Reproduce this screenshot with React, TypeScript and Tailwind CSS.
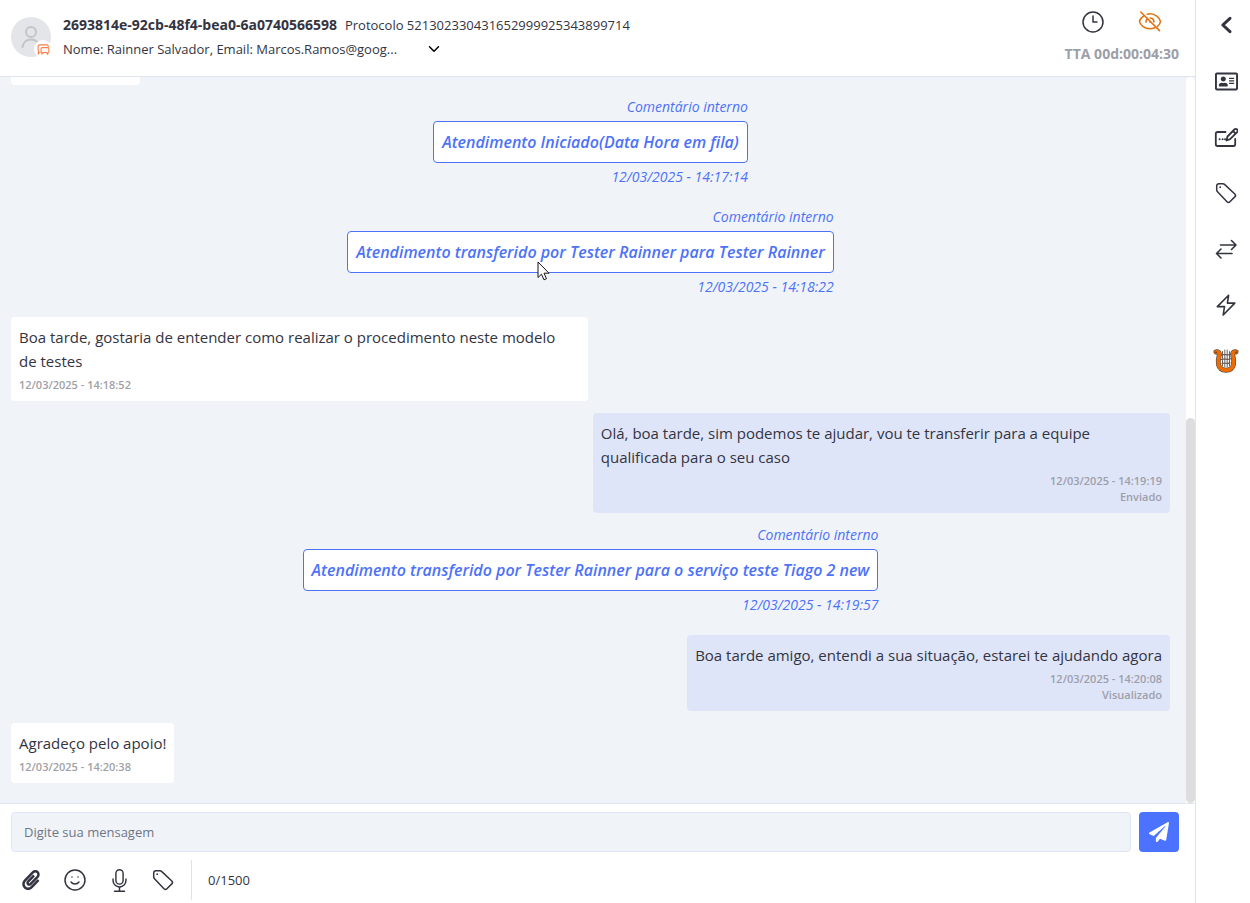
import { useState } from "react";
import type { ReactNode } from "react";
import { ChevronDown, Clock3, Smile } from "lucide-react";
import { FaPaperclip, FaPaperPlane, FaRegAddressCard } from "react-icons/fa";
import { BsMic } from "react-icons/bs";

type Message =
  | { kind: "comment"; text: string; time: string; pointer?: boolean }
  | { kind: "in"; text: string; time: string }
  | { kind: "out"; text: string; time: string; status: string };

const MAX_LENGTH = 1500;

const MESSAGES: Message[] = [
  { kind: "comment", text: "Atendimento Iniciado(Data Hora em fila)", time: "12/03/2025 - 14:17:14" },
  { kind: "comment", text: "Atendimento transferido por Tester Rainner para Tester Rainner", time: "12/03/2025 - 14:18:22", pointer: true },
  { kind: "in", text: "Boa tarde, gostaria de entender como realizar o procedimento neste modelo de\u00a0testes", time: "12/03/2025 - 14:18:52" },
  { kind: "out", text: "Olá, boa tarde, sim podemos te ajudar, vou te transferir para a equipe qualificada para o seu caso", time: "12/03/2025 - 14:19:19", status: "Enviado" },
  { kind: "comment", text: "Atendimento transferido por Tester Rainner para o serviço teste Tiago 2 new", time: "12/03/2025 - 14:19:57" },
  { kind: "out", text: "Boa tarde amigo, entendi a sua situação, estarei te ajudando agora", time: "12/03/2025 - 14:20:08", status: "Visualizado" },
  { kind: "in", text: "Agradeço pelo apoio!", time: "12/03/2025 - 14:20:38" },
];

function Line({ size = 24, width = 1.5, children }: { size?: number; width?: number; children: ReactNode }) {
  return (
    <svg width={size} height={size} viewBox="0 0 24 24" fill="none" stroke="currentColor" strokeWidth={width} strokeLinecap="round" strokeLinejoin="round">
      {children}
    </svg>
  );
}

const TagIcon = () => (
  <Line>
    <path d="M4.8 2.8h4c.8 0 1.5.3 2 .8l10 9.400c.9.9.9 2 0 2.900l-4.900 4.900c-.9.9-2 .9-2.900 0l-9.500-10c-.5-.5-.8-1.200-.8-2V4.900c0-1.200.9-2.100 2.100-2.100z" />
    <path d="M6.200 6.200h.01" strokeWidth={1.800} />
  </Line>
);

const BackIcon = () => (
  <Line width={3}><path d="M16 5.300 8.800 12l7.200 6.700" /></Line>
);

const DraftIcon = () => (
  <Line width={1.800}>
    <path d="M11.500 7h-8a1.700 1.700 0 0 0-1.700 1.700v10.600A1.700 1.700 0 0 0 3.500 21h16a1.700 1.700 0 0 0 1.700-1.700V14" />
    <path d="m12.500 15.500 1-4 6.900-7a1.900 1.900 0 0 1 2.700 2.700l-7 7zM19 6l2.600 2.600" />
    <path d="M5.600 14.200h.01M8.600 14.200h.01M11 14.200h.01" strokeWidth={2} />
  </Line>
);

const TransferIcon = () => (
  <Line width={1.600}>
    <path d="M6.500 8H22M17.500 3.500 22 8l-4.500 4.500M18 16.500H2.500M7 12l-4.500 4.500L7 21" />
  </Line>
);

const BoltIcon = () => (
  <Line width={1.600}><path d="M14.600 2.300 3.300 13.600h7.200L9.200 22 20.800 10.100h-7.400z" /></Line>
);

const EyeOffIcon = () => (
  <Line width={1.600}>
    <path d="M5.800 5.800C3.200 7.600 1.700 9.900 1.500 11.500c.5 3.300 5 7.300 10.500 7.300 1.700 0 3.300-.4 4.700-1M9.200 4.200c.9-.2 1.800-.4 2.800-.4 5.500 0 10 4 10.500 7.700-.2 1.700-1.300 3.500-3 4.900" />
    <path d="M8 12.100a4 4 0 0 1 1.700-3.700M12.200 8a4 4 0 0 1 3.700 4M11.800 12h.8M2.800 2l18.700 18.600" />
  </Line>
);

function LyreIcon() {
  const frame = "M3 4c2.700-.6 4 1 3.200 3.500C4.700 12.600 3.700 22.200 13 22.200s8.300-9.600 6.800-14.700C19 5 20.300 3.400 23 4";
  return (
    <svg width={26} height={26} viewBox="0 0 26 26" fill="none" strokeLinecap="round">
      <path d={frame} stroke="#4b4b50" strokeWidth={5} />
      <path d={frame} stroke="#ef6c00" strokeWidth={3.800} />
      <circle cx={3} cy={4.500} r={1} fill="#7a4420" />
      <circle cx={23} cy={4.500} r={1} fill="#7a4420" />
      <path d="M9.500 3.500v14.500M11.800 2v17M14.200 2v17M16.500 3.500v14.500" stroke="#6b6562" strokeWidth={1} />
      <path d="M8 7c3-1.500 7 1 10-.8M8.500 11.500c3-1.500 6 1 9-.8M9 15.500c3-1.200 5 .8 8-.6" stroke="#6b5a50" strokeWidth={1.200} />
    </svg>
  );
}

function Avatar() {
  return (
    <div className="relative h-10 w-10 shrink-0 rounded-full bg-[#e4e5e9] text-[#c4c4c6]">
      <svg width={40} height={40} viewBox="0 0 40 40" fill="none" stroke="currentColor" strokeWidth={2} strokeLinecap="round">
        <circle cx={20} cy={15} r={5} />
        <path d="M11.500 30c.6-4.500 4-7.400 8.500-7.400 2.400 0 4.500.8 6 2.200" />
      </svg>
      <span className="absolute -right-px -bottom-px flex h-[18px] w-[18px] items-center justify-center rounded-full bg-white text-[#fa7e45]">
        <Line size={13} width={2}>
          <path d="M6 17H4l-1.500 3.500v-7C2 12.500 2 12 2 11V7.500C2 5 3.500 3.500 5.500 3.500h12c2 0 3.500 1.500 3.500 3.500" />
          <path d="M12 8.500h7.500c1.500 0 2.500 1 2.500 2.500v4c0 1.500-1 2.500-2 2.500V21l-3-3.500h-5l-3 3v-3.500c-1-.5-1.500-1-1.500-2v-4c0-1.500 1-2.500 2.500-2.500z" />
        </Line>
      </span>
    </div>
  );
}

function Pointer() {
  return (
    <svg className="absolute top-[29px] left-[189px]" width={13} height={20} viewBox="0 0 13 20">
      <path d="M1 1v15.500l3.500-3.300 2.500 5.600 2.500-1.100L7 12.200h5z" fill="#fff" stroke="#15151d" strokeWidth={1} />
    </svg>
  );
}

function ChatItem({ msg }: { msg: Message }) {
  if (msg.kind === "comment") {
    return (
      <div className="mb-5 flex flex-col items-end gap-1 self-center text-sm leading-5 text-[#4d72f8] italic">
        <span>Comentário interno</span>
        <p className="relative rounded-sm border border-[#4d72f8] bg-white p-2 text-base leading-6 font-semibold">
          {msg.text}
          {msg.pointer && <Pointer />}
        </p>
        <span>{msg.time}</span>
      </div>
    );
  }
  if (msg.kind === "in") {
    return (
      <div className="mb-3 flex max-w-[49.8%] flex-col gap-1 self-start rounded-sm bg-white p-2">
        <p className="text-[15px] leading-6">{msg.text}</p>
        <span className="text-[11px] leading-4 font-semibold text-[#a0a1a6]">{msg.time}</span>
      </div>
    );
  }
  return (
    <div className="mb-3 flex max-w-[49.8%] flex-col gap-1 self-end rounded-sm bg-[#dfe5f9] p-2">
      <p className="text-[15px] leading-6">{msg.text}</p>
      <div className="flex flex-col items-end text-[11px] leading-4 font-semibold text-[#9c9fa9]">
        <span>{msg.time}</span>
        <span>{msg.status}</span>
      </div>
    </div>
  );
}

const SIDE_ACTIONS = [
  { label: "Recolher", icon: <BackIcon /> },
  { label: "Contato", icon: <FaRegAddressCard size={23} /> },
  { label: "Rascunho", icon: <DraftIcon /> },
  { label: "Etiquetas", icon: <TagIcon /> },
  { label: "Transferir", icon: <TransferIcon /> },
  { label: "Ações rápidas", icon: <BoltIcon /> },
  { label: "Lira", icon: <LyreIcon /> },
];

const INPUT_ACTIONS = [
  { label: "Anexar", icon: <FaPaperclip size={20} /> },
  { label: "Emoji", icon: <Smile size={24} strokeWidth={1.5} /> },
  { label: "Gravar", icon: <BsMic size={23} /> },
  { label: "Etiqueta", icon: <TagIcon /> },
];

export default function App() {
  const [draft, setDraft] = useState("");

  return (
    <div className="flex h-screen bg-white font-['Open_Sans','Noto_Sans',sans-serif] text-[#33343f]">
      <main className="flex min-w-0 flex-1 flex-col border-r border-[#e2e4ea]">
        {/* Header */}
        <header className="flex items-start justify-between border-b border-[#dfe4ef] pt-2.5 pr-4 pb-3 pl-[11px]">
          <div className="flex items-center gap-3 pt-[3px]">
            <Avatar />
            <div className="text-[13px] leading-6">
              <div className="flex gap-2">
                <strong className="text-sm leading-6 font-bold">2693814e-92cb-48f4-bea0-6a0740566598</strong>
                <span>Protocolo 521302330431652999925343899714</span>
              </div>
              <div className="flex items-center gap-7">
                <span>Nome: Rainner Salvador, Email: Marcos.Ramos@goog...</span>
                <button aria-label="Mais detalhes" className="text-black"><ChevronDown size={18} /></button>
              </div>
            </div>
          </div>
          <div className="flex flex-col gap-2.5">
            <div className="flex justify-around">
              <button aria-label="Histórico"><Clock3 size={24} strokeWidth={1.5} /></button>
              <button aria-label="Ocultar" className="text-[#e07414]"><EyeOffIcon /></button>
            </div>
            <span className="text-sm leading-5 font-bold text-[#9c9ea8]">TTA 00d:00:04:30</span>
          </div>
        </header>

        {/* Messages */}
        <section className="flex min-h-0 flex-1 overflow-hidden bg-[#f0f4f9]">
          <div className="flex flex-1 flex-col justify-end pr-4 pb-2 pl-[11px]">
            <div className="mb-3 h-2 w-[129px] rounded-b-sm bg-white" />
            {MESSAGES.map(m => <ChatItem key={m.time} msg={m} />)}
          </div>
          <div className="flex w-[9px] flex-col justify-end rounded-t-full bg-white">
            <div className="h-[53%] rounded-full bg-[#dddddd]" />
          </div>
        </section>

        {/* Input */}
        <footer className="border-t border-[#dfe4ef] pt-2 pr-4 pb-[3px] pl-[11px]">
          <div className="flex gap-2">
            <input
              value={draft}
              maxLength={MAX_LENGTH}
              onChange={e => setDraft(e.target.value)}
              aria-label="Mensagem"
              placeholder="Digite sua mensagem"
              className="h-10 min-w-0 flex-1 rounded-sm border border-[#dfe5f9] bg-[#f0f4f9] px-3 text-[13px] outline-none placeholder:text-[#6f7683]"
            />
            <button aria-label="Enviar" className="flex h-10 w-10 items-center justify-center rounded-sm bg-[#4c73ff] text-white">
              <FaPaperPlane size={20} />
            </button>
          </div>
          <div className="mt-2 flex h-10 items-center gap-1.5">
            <div className="-ml-0.5 flex">
              {INPUT_ACTIONS.map(a => (
                <button key={a.label} aria-label={a.label} className="flex h-10 w-11 items-center justify-center">{a.icon}</button>
              ))}
            </div>
            <span className="border-l border-[#dfe1f0] pl-4 text-[13px] leading-10">{draft.length}/{MAX_LENGTH}</span>
          </div>
        </footer>
      </main>

      {/* Side actions */}
      <nav className="flex w-[54px] flex-col gap-3.5 pt-1">
        {SIDE_ACTIONS.map(a => (
          <button key={a.label} aria-label={a.label} className="flex h-[42px] items-center justify-center pl-1.5">{a.icon}</button>
        ))}
      </nav>
    </div>
  );
}
